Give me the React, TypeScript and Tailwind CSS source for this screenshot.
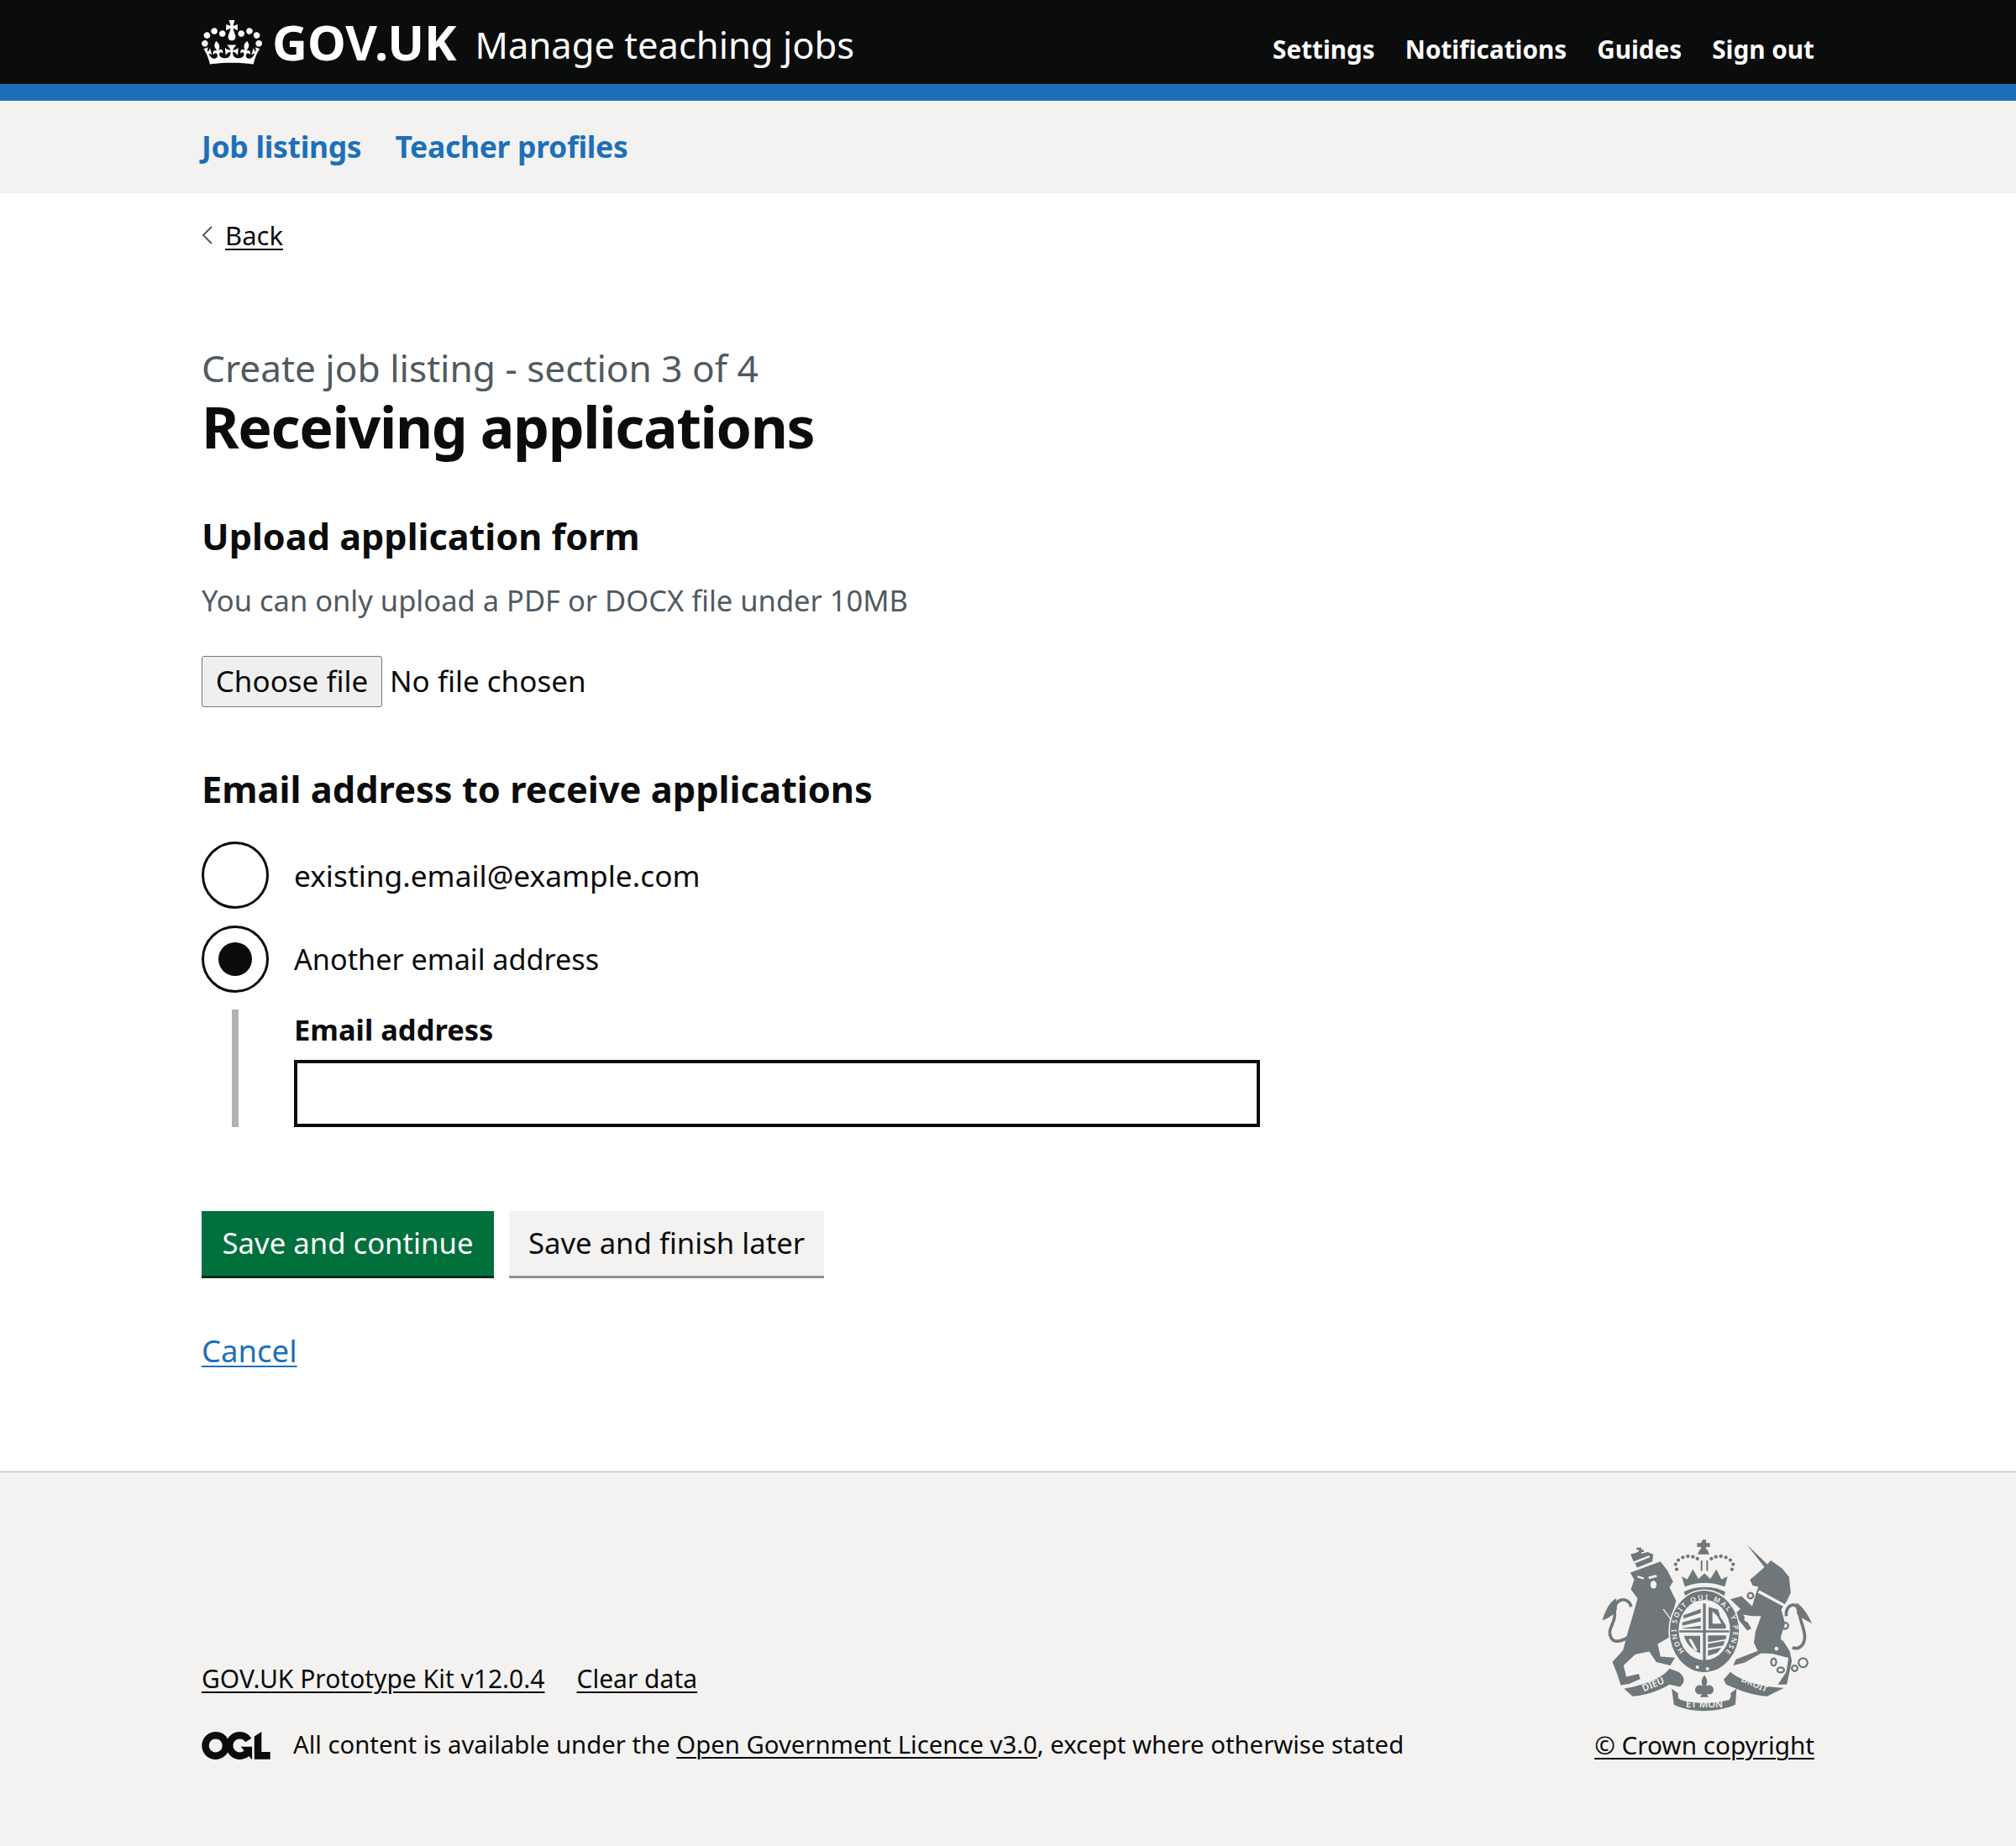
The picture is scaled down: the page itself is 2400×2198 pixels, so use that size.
const font = "font-['Noto_Sans',sans-serif]";

const CrownLogo = () => (
  <svg viewBox="0 0 132 97" className="w-[72px] h-[53px] fill-white shrink-0">
    <path
      fillRule="evenodd"
      d="M25 30.2c3.5 1.5 7.7-.2 9.1-3.7 1.5-3.6-.2-7.8-3.9-9.2-3.6-1.4-7.6.3-9.1 3.9-1.4 3.5.3 7.5 3.9 9zM9 39.5c3.6 1.5 7.8-.2 9.2-3.7 1.5-3.6-.2-7.8-3.9-9.1-3.6-1.5-7.6.2-9.1 3.8-1.4 3.5.3 7.5 3.8 9zM4.4 57.2c3.5 1.5 7.7-.2 9.1-3.8 1.5-3.6-.2-7.7-3.9-9.1-3.5-1.5-7.6.3-9.1 3.8-1.4 3.5.3 7.6 3.9 9.1zm38.3-21.4c3.5 1.5 7.7-.2 9.1-3.8 1.5-3.6-.2-7.7-3.9-9.1-3.6-1.5-7.6.3-9.1 3.8-1.3 3.6.4 7.7 3.9 9.1zm64.4-5.6c-3.6 1.5-7.8-.2-9.1-3.7-1.5-3.6.2-7.8 3.8-9.2 3.6-1.4 7.7.3 9.2 3.9 1.3 3.5-.4 7.5-3.9 9zm15.9 9.3c-3.6 1.5-7.7-.2-9.1-3.7-1.5-3.6.2-7.8 3.7-9.1 3.6-1.5 7.7.2 9.2 3.8 1.5 3.5-.3 7.5-3.8 9zm4.7 17.7c-3.6 1.5-7.8-.2-9.2-3.8-1.5-3.6.2-7.7 3.9-9.1 3.6-1.5 7.7.3 9.2 3.8 1.3 3.5-.4 7.6-3.9 9.1zM89.3 35.8c-3.6 1.5-7.8-.2-9.2-3.8-1.4-3.6.2-7.7 3.9-9.1 3.6-1.5 7.7.3 9.2 3.8 1.4 3.6-.3 7.7-3.9 9.1zM69.7 17.7l8.9 4.7V9.3l-8.9 2.8c-.2-.3-.5-.6-.9-.9L72.4 0H59.6l3.6 11.2c-.3.3-.6.5-.9.9l-8.8-2.8v13.1l8.8-4.7c.3.3.6.7.9.9l-5 15.4v.1c-.2.8-.4 1.6-.4 2.4 0 4.1 3.1 7.5 7 8.1h.2c.3 0 .7.1 1 .1.4 0 .7 0 1-.1h.2c4-.6 7.1-4.1 7.1-8.1 0-.8-.1-1.7-.4-2.4V34l-5.1-15.4c.4-.2.7-.6 1-.9zM66 92.8c16.9 0 32.8 1.1 47.1 3.2 4-16.9 8.9-26.7 14-33.5l-9.6-3.4c1 4.9 1.1 7.2 0 10.2-1.5-1.4-3-4.3-4.2-8.7L108.6 76c2.8-2 5-3.2 7.5-3.3-4.4 9.4-10 11.9-13.6 11.2-4.3-.8-6.3-4.6-5.6-7.9 1-4.7 5.7-5.9 8-.5 4.3-8.7-3-11.4-7.6-8.8 7.1-7.2 7.9-13.5 2.1-21.1-8 6.1-8.1 12.3-4.5 20.8-4.7-5.4-12.1-2.5-9.5 6.2 3.4-5.2 7.9-2 7.2 3.1-.6 4.3-6.4 7.8-13.5 7.2-10.3-.9-10.9-8-11.2-13.8 2.5-.5 7.1 1.8 11 7.3L80.2 60c-4.1 4.4-8 5.3-12.3 5.4 1.4-4.4 8-11.6 8-11.6H55.5s6.4 7.2 7.9 11.6c-4.2-.1-8-1-12.3-5.4l1.4 16.4c3.9-5.5 8.5-7.7 10.9-7.3-.3 5.8-.9 12.8-11.1 13.8-7.2.6-12.9-2.9-13.5-7.2-.7-5 3.8-8.3 7.1-3.1 2.7-8.7-4.6-11.6-9.4-6.2 3.7-8.5 3.6-14.7-4.6-20.8-5.8 7.6-5 13.9 2.2 21.1-4.7-2.6-11.9.1-7.7 8.8 2.3-5.5 7.1-4.2 8.1.5.7 3.3-1.3 7.1-5.7 7.9-3.5.7-9-1.8-13.5-11.2 2.5.1 4.7 1.3 7.5 3.3l-4.7-15.4c-1.2 4.4-2.7 7.2-4.3 8.7-1.1-3-.9-5.3 0-10.2l-9.5 3.4c5 6.9 9.9 16.7 14 33.5 14.8-2.1 30.8-3.2 47.7-3.2z"
    />
  </svg>
);

const OglLogo = () => (
  <svg viewBox="0 0 483.2 195.7" className="w-[82px] h-[33px] fill-[#0b0c0c] shrink-0">
    <path d="M421.5 142.8V.1l-50.7 32.3v161.1h112.4v-50.7zm-122.3-9.6A47.12 47.12 0 0 1 221 97.8c0-26 21.1-47.1 47.1-47.1 16.7 0 31.4 8.7 39.7 21.8l42.7-27.2A97.63 97.63 0 0 0 268.1 0c-36.5 0-68.3 20.1-85.1 49.7A98 98 0 0 0 97.8 0C43.9 0 0 43.9 0 97.8s43.9 97.8 97.8 97.8c36.5 0 68.3-20.1 85.1-49.7a97.76 97.76 0 0 0 149.6 25.4l19.4 22.2h3v-87.8h-80l24.3 27.5zM97.8 145c-26 0-47.1-21.1-47.1-47.1s21.1-47.1 47.1-47.1 47.2 21 47.2 47S123.8 145 97.8 145" />
  </svg>
);

const crestDots = [
  [398, 178], [394, 160], [404, 145], [420, 135], [438, 131], [456, 133], [472, 140],
  [522, 140], [538, 133], [556, 131], [574, 135], [590, 145], [600, 160], [596, 178],
];

// hand traced from the crest, coordinates are in a 3x crop of the footer
const RoyalCrest = () => (
  <svg viewBox="125 65 765 625" className="mt-[2px] w-[255px] h-[208px] shrink-0">
    <defs>
      <path id="garter-ring" d="M432 478C385 430 385 350 432 312C475 278 525 278 565 312C612 355 612 430 565 480" />
    </defs>
    <g fill="#6f777b">
      {/* lion */}
      <path d="M232 190L340 150L365 182L385 222L372 242L396 290L385 330L405 395L408 425L392 432L372 420L330 445L340 490L392 494L375 522L325 510L300 472L250 482L208 522L218 562L262 552L268 570L228 588L198 592L185 552L168 510L206 468L224 400L242 340L258 282L234 250L246 215z" />
      <path d="M235 312C225 270 170 283 176 330C182 372 145 390 164 424C176 442 200 436 226 420" fill="none" stroke="#6f777b" strokeWidth="11" />
      <path d="M182 282C160 290 140 330 132 362C150 352 172 345 184 322z" />
      {/* lion face */}
      <path d="M296 205l28-8 4 8-28 8zM258 200l24 8-4 6-20-6z" fill="#f3f2f1" />
      <ellipse cx="315" cy="233" rx="11" ry="14" fill="#f3f2f1" />
      <path d="M350 320L405 395" stroke="#f3f2f1" strokeWidth="4" fill="none" />
      {/* lion crown */}
      <path d="M262 100h10v8h8v8h-8v6l22-6 20 8-3 26-54 22-16-28 -8-20 20-6 9-4v-6h-8v-8h8z" />
      <path d="M244 150l56-22 2 7-54 22z" fill="#f3f2f1" />

      {/* unicorn */}
      <path d="M648 88L722 160L735 146L775 175L800 205L806 262L790 295L772 322L786 372L770 420L802 470L810 505L792 590L760 590L790 545L798 495L740 480L700 478L640 512L600 522L610 500L688 470L674 440L680 400L700 345L668 345L636 340L665 390L650 396L604 340L626 320L590 285L630 274L668 310L680 270L685 255L690 240L670 236L660 215L690 190L712 170z" />
      <path d="M790 345C785 300 832 290 836 332C840 372 872 418 846 450C836 462 822 462 812 458" fill="none" stroke="#6f777b" strokeWidth="11" />
      <path d="M826 298C850 310 870 345 882 372C860 358 842 352 828 336z" />
      {/* unicorn collar */}
      <path d="M688 262l94 50 4-9-92-50z" fill="#f3f2f1" />
      <circle cx="778" cy="426" r="7" fill="#f3f2f1" />
      <circle cx="755" cy="462" r="7" fill="#f3f2f1" />
      <circle cx="650" cy="356" r="10" fill="#f3f2f1" />
      <g fill="none" stroke="#6f777b" strokeWidth="7">
        <circle cx="662" cy="272" r="10" />
        <circle cx="786" cy="380" r="11" />
        <ellipse cx="745" cy="510" rx="9" ry="13" />
        <ellipse cx="770" cy="538" rx="12" ry="9" />
        <circle cx="820" cy="532" r="10" />
        <circle cx="850" cy="512" r="16" />
      </g>

      {/* royal crown */}
      <path d="M491 72h12v12h14v14h-14v8h4l8 18h-42l8-18h4v-8h-14v-14h14z" />
      <path d="M484 146h6v38h-6zM504 146h6v38h-6z" />
      <path d="M416 203L436 214L456 178L476 212L497 192L518 212L540 178L558 214L580 203L570 240C520 222 475 222 427 240z" />
      <path d="M424 258C470 236 526 236 572 258L568 272C525 252 470 252 428 272z" />
      {crestDots.map(([cx, cy]) => (
        <circle key={`${cx}-${cy}`} cx={cx} cy={cy} r="6.5" />
      ))}
      {/* garter */}
      <ellipse cx="497" cy="400" rx="126" ry="148" stroke="#f3f2f1" strokeWidth="5" />
    </g>

    <ellipse cx="497" cy="395" rx="92" ry="108" fill="#f3f2f1" />
    <g fill="#6f777b">
      <path d="M492 300h10v210h-10zM408 396h178v8h-178z" />
      {/* quarters: lions, rampant lion, harp, lions */}
      <path d="M422 342l62-22v14l-62 20zM418 368l66-18v14l-66 16zM420 388l64-8v10h-64z" />
      <path d="M512 312l34 10 8 26 20 30 0 12h-62zM526 328v44h32l-14-26z" fillRule="evenodd" />
      <path d="M424 416h58v62c-26-10-50-32-58-62zM440 428l24 44 8-6-22-40z" fillRule="evenodd" />
      <path d="M510 414h66l-2 14-64 10zM510 444l60-10-6 16-54 10zM510 468l48-10-14 18-34 12z" />
      <circle cx="472" cy="528" r="6" fill="#f3f2f1" />
      <circle cx="508" cy="534" r="6" fill="#f3f2f1" />
      {/* fleur de lis */}
      <path d="M497 556C484 572 486 586 491 596C479 586 462 596 464 611C466 623 478 629 488 623L482 635H512L506 623C516 629 528 623 530 611C532 596 515 586 503 596C508 586 510 572 497 556z" />
      {/* motto ribbons */}
      <path d="M210 605C280 592 345 570 372 533L405 545C425 560 432 580 410 598L372 590C335 612 285 630 240 632z" />
      <path d="M380 605L404 622C400 632 404 640 412 645C465 660 530 660 585 645C592 638 594 630 590 622L612 605L608 662C540 692 450 692 388 662z" />
      <path d="M590 545C625 575 700 600 782 602L722 632C670 630 615 608 575 590L566 572z" />
    </g>
    <g fill="#f3f2f1" fontFamily="'Noto Sans',sans-serif" fontWeight="600" textAnchor="middle">
      <text fontSize="25">
        <textPath href="#garter-ring" startOffset="50%" textLength="500">
          HONI SOIT QUI MAL Y PENSE
        </textPath>
      </text>
      <text x="318" y="600" fontSize="34" transform="rotate(-22 318 600)">
        DIEU
      </text>
      <text x="497" y="672" fontSize="34">
        ET MON
      </text>
      <text x="672" y="598" fontSize="32" transform="rotate(24 672 598)">
        DROIT
      </text>
    </g>
  </svg>
);

const RadioCircle = ({ checked }: { checked?: boolean }) => (
  <span className="w-20 h-20 rounded-full border-[3.5px] border-[#0b0c0c] bg-white flex items-center justify-center shrink-0">
    {checked && <span className="w-10 h-10 rounded-full bg-[#0b0c0c]" />}
  </span>
);

export default function App() {
  return (
    <div className={`${font} min-h-[2198px] bg-white text-[#0b0c0c] flex flex-col`}>
      {/* Header */}
      <header className="bg-[#0b0c0c] h-[120px] border-b-[20px] border-[#1d70b8] text-white">
        <div className="w-[1920px] mx-auto h-[100px] flex items-center justify-between">
          <div className="flex items-center">
            <CrownLogo />
            <span className="ml-3 text-[58px] leading-none font-bold">GOV.UK</span>
            <span className="ml-[22px] text-[43.5px] leading-none mt-[8px]">Manage teaching jobs</span>
          </div>
          <nav className="flex gap-9 text-[29.7px] font-bold mt-[19px]">
            <a>Settings</a>
            <a>Notifications</a>
            <a>Guides</a>
            <a>Sign out</a>
          </nav>
        </div>
      </header>

      {/* Service nav */}
      <div className="bg-[#f3f2f1] h-[110px]">
        <div className="w-[1920px] mx-auto h-full flex items-center gap-10 text-[35.5px] tracking-[-0.3px] font-bold text-[#1d70b8]">
          <a>Job listings</a>
          <a>Teacher profiles</a>
        </div>
      </div>

      <main className="w-[1920px] mx-auto flex-1">
        <a className="mt-[30px] flex items-center gap-[14px] text-[31px] leading-10 h-10">
          <svg viewBox="0 0 14 24" className="w-[14px] h-6 fill-none stroke-[#505a5f] stroke-2">
            <path d="M12 2L2 12l10 10" />
          </svg>
          <span className="underline decoration-2 underline-offset-4">Back</span>
        </a>

        <p className="mt-[109px] text-[44.2px] leading-[58px] text-[#505a5f]">
          Create job listing - section 3 of 4
        </p>
        <h1 className="mt-[1px] text-[68px] leading-[80px] tracking-[-1.35px] font-bold">Receiving applications</h1>

        <h2 className="mt-[61px] text-[43.2px] leading-[60px] font-bold">Upload application form</h2>
        <p className="mt-[24px] text-[34.5px] leading-[44px] text-[#505a5f]">
          You can only upload a PDF or DOCX file under 10MB
        </p>

        <div className="mt-[44px] flex items-center text-[35px]">
          <button className="w-[215px] h-[61px] bg-[#efefef] border-[1.5px] border-[#767676] rounded-[3px]">
            Choose file
          </button>
          <span className="ml-[9px]">No file chosen</span>
        </div>

        <h2 className="mt-[68px] text-[43.4px] leading-[60px] font-bold">
          Email address to receive applications
        </h2>

        <label className="mt-[32px] flex items-center gap-[30px] text-[35.3px]">
          <RadioCircle />
          existing.email@example.com
        </label>
        <label className="mt-5 flex items-center gap-[30px] text-[34.2px]">
          <RadioCircle checked />
          Another email address
        </label>

        <div className="mt-5 ml-9 pl-[66px] border-l-8 border-[#b1b4b6] h-[140px]">
          <label className="block pt-[2px] text-[34.5px] leading-[44px] font-bold">Email address</label>
          <input className="mt-[14px] block w-[1150px] h-20 border-4 border-[#0b0c0c] bg-white" />
        </div>

        <div className="mt-[100px] flex gap-[18px] text-[34.7px]">
          <button className="w-[348px] h-20 bg-[#00703c] text-white border-b-[3px] border-[#002d18]">
            Save and continue
          </button>
          <button className="w-[375px] h-20 bg-[#f3f2f1] border-b-[3px] border-[#929191]">
            Save and finish later
          </button>
        </div>

        <a className="block mt-[64px] text-[36.5px] leading-[44px] text-[#1d70b8] underline decoration-2 underline-offset-4">
          Cancel
        </a>
      </main>

      {/* Footer */}
      <footer className="bg-[#f3f2f1] border-t-[1.5px] border-[#b1b4b6] h-[446px]">
        <div className="w-[1920px] mx-auto h-full pt-[76px] flex justify-between">
          <div className="self-end pb-[98px] text-[30px]">
            <div className="flex gap-[38px]">
              <a className="underline decoration-2 underline-offset-4">GOV.UK Prototype Kit v12.0.4</a>
              <a className="underline decoration-2 underline-offset-4">Clear data</a>
            </div>
            <div className="mt-[35px] flex items-center gap-[27px] text-[29.3px]">
              <OglLogo />
              <span>
                All content is available under the{' '}
                <a className="underline decoration-2 underline-offset-4">Open Government Licence v3.0</a>, except
                where otherwise stated
              </span>
            </div>
          </div>
          <div className="flex flex-col items-end">
            <RoyalCrest />
            <a className="mt-[17px] text-[29.7px] underline decoration-2 underline-offset-4">© Crown copyright</a>
          </div>
        </div>
      </footer>
    </div>
  );
}
